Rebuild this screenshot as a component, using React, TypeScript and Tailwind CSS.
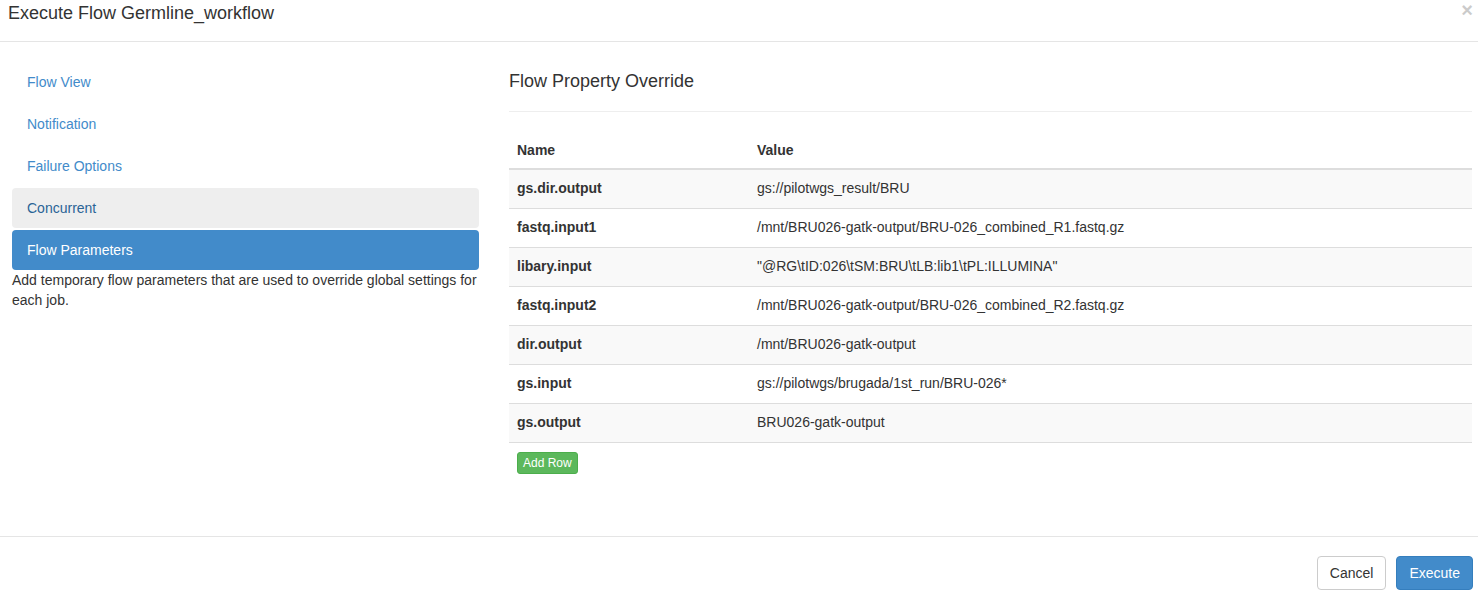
import * as React from "react";

const navItems = [
  { label: "Flow View", state: "idle" },
  { label: "Notification", state: "idle" },
  { label: "Failure Options", state: "idle" },
  { label: "Concurrent", state: "hover" },
  { label: "Flow Parameters", state: "active" },
];

const params: Array<[string, string]> = [
  ["gs.dir.output", "gs://pilotwgs_result/BRU"],
  ["fastq.input1", "/mnt/BRU026-gatk-output/BRU-026_combined_R1.fastq.gz"],
  ["libary.input", "\"@RG\\tID:026\\tSM:BRU\\tLB:lib1\\tPL:ILLUMINA\""],
  ["fastq.input2", "/mnt/BRU026-gatk-output/BRU-026_combined_R2.fastq.gz"],
  ["dir.output", "/mnt/BRU026-gatk-output"],
  ["gs.input", "gs://pilotwgs/brugada/1st_run/BRU-026*"],
  ["gs.output", "BRU026-gatk-output"],
];

function NavItem({ label, state }: { label: string; state: string }): React.JSX.Element {
  const tone =
    state === "active"
      ? "bg-[#428bca] text-white"
      : state === "hover"
        ? "bg-[#eeeeee] text-[#2a6496]"
        : "text-[#428bca]";
  return (
    <li className={`h-[40px] rounded-[4px] px-[15px] text-[14px] leading-[40px] ${tone}`}>{label}</li>
  );
}

export default function App(): React.JSX.Element {
  return (
    <div className="flex h-[607px] w-[1478px] flex-col bg-white font-['Liberation_Sans',Arial,sans-serif] text-[14px] text-[#333333]">
      <div className="flex h-[42px] shrink-0 items-start justify-between border-b border-[#e5e5e5] pl-[8px] pr-[5px]">
        <h4 className="text-[18px] leading-[26px]">Execute Flow Germline_workflow</h4>
        <button className="text-[20px] font-bold leading-[20px] text-black opacity-20">×</button>
      </div>

      <div className="flex flex-1 gap-[30px] pl-[12px] pr-[6px] pt-[20px]">
        <div className="w-[467px] shrink-0">
          <ul className="flex flex-col gap-[2px]">
            {navItems.map((n) => (
              <NavItem key={n.label} label={n.label} state={n.state} />
            ))}
          </ul>
          <p className="leading-[20px]">
            Add temporary flow parameters that are used to override global settings for each job.
          </p>
        </div>

        <div className="flex-1">
          <div className="border-b border-[#eeeeee] pb-[16px] pt-[5px]">
            <h3 className="text-[18px] leading-[28px]">Flow Property Override</h3>
          </div>

          <div className="mt-[19px]">
            <div className="grid h-[39px] grid-cols-[240px_1fr] border-b-2 border-[#dddddd] font-bold leading-[20px]">
              <div className="px-[8px] pt-[9px]">Name</div>
              <div className="px-[8px] pt-[9px]">Value</div>
            </div>
            {params.map(([name, value], i) => (
              <div
                key={name}
                className={`grid h-[39px] grid-cols-[240px_1fr] border-b border-[#dddddd] leading-[20px] ${i % 2 === 0 ? "bg-[#f9f9f9]" : "bg-white"}`}
              >
                <div className="px-[8px] pt-[8px] font-bold">{name}</div>
                <div className="px-[8px] pt-[8px]">{value}</div>
              </div>
            ))}
            <button className="ml-[8px] mt-[9px] h-[22px] rounded-[3px] border border-[#4cae4c] bg-[#5cb85c] px-[5px] text-[12px] leading-[20px] text-white">
              Add Row
            </button>
          </div>
        </div>
      </div>

      <div className="flex h-[71px] shrink-0 items-start justify-end gap-[10px] border-t border-[#e5e5e5] pr-[5px] pt-[19px]">
        <button className="h-[34px] rounded-[4px] border border-[#cccccc] bg-white px-[12px] text-[14px] text-[#333333]">
          Cancel
        </button>
        <button className="h-[34px] rounded-[4px] border border-[#357ebd] bg-[#428bca] px-[12px] text-[14px] text-white">
          Execute
        </button>
      </div>
    </div>
  );
}
